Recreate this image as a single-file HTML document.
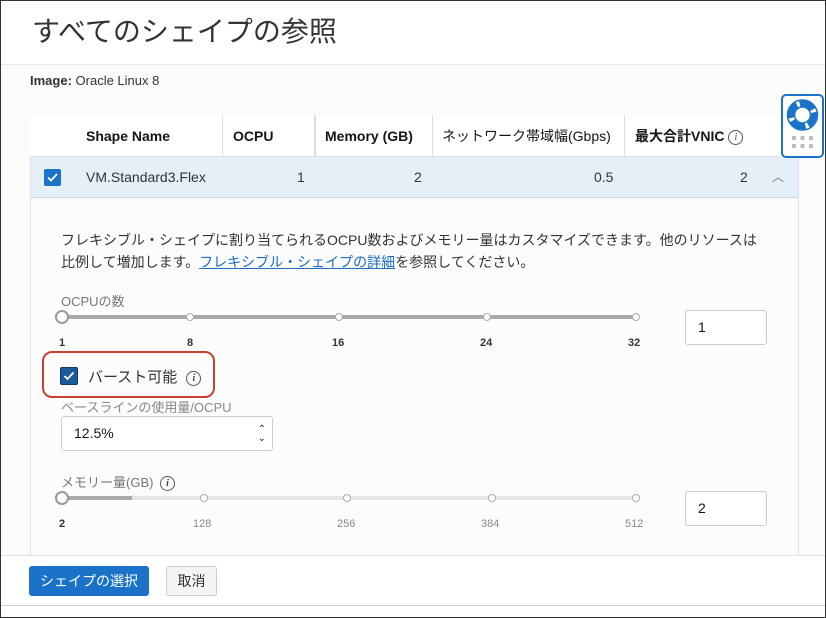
<!DOCTYPE html>
<html><head><meta charset="utf-8"><style>
*{box-sizing:border-box;margin:0;padding:0}
body{width:826px;height:618px;overflow:hidden;background:#fff;font-family:"Liberation Sans","Noto Sans CJK JP",sans-serif;color:#161513;position:relative}
.frame{position:absolute;left:0;top:0;width:826px;height:618px;border:1px solid #333;pointer-events:none;z-index:10}
.abs{position:absolute}
.body{position:absolute;left:1px;top:64px;width:824px;height:492px;background:#fbfbfa;border-top:1px solid #e8e8e8}
.th{position:absolute;top:115px;height:42px;font-size:14px;font-weight:bold;line-height:42px}
.vl{position:absolute;top:115px;width:1px;height:42px;background:#ddd}
.tick{position:absolute;width:8px;height:8px;border-radius:50%;border:1.5px solid #aaa;background:#fff}
.lbl{position:absolute;font-size:11px;font-weight:bold;color:#333}
.lbl2{position:absolute;font-size:11px;color:#888}
.inp{position:absolute;background:#fff;border:1px solid #ccc;border-radius:3px;font-size:14px;padding-left:12px}
.info{display:inline-block;width:15px;height:15px;border:1.2px solid #555;border-radius:50%;font-size:10px;font-style:italic;font-family:"Liberation Serif",serif;text-align:center;line-height:13px;font-weight:bold;color:#444;vertical-align:middle}
</style></head><body>
<div class="frame"></div>
<div class="abs" style="left:32px;top:10px;font-size:28px;color:#333">すべてのシェイプの参照</div>
<div class="body"></div>
<div class="abs" style="left:30px;top:73px;font-size:13px;color:#333"><b>Image:</b> Oracle Linux 8</div>
<div class="abs" style="left:30px;top:115px;width:769px;height:440px;border:1px solid #e0e0e0;border-bottom:none;background:#fcfcfc"></div>
<div class="abs" style="left:30px;top:115px;width:751px;height:42px;background:#fff;border-bottom:1px solid #ddd"></div>
<div class="th" style="left:86px">Shape Name</div>
<div class="th" style="left:233px">OCPU</div>
<div class="th" style="left:325px">Memory (GB)</div>
<div class="th" style="left:442px;font-weight:normal">ネットワーク帯域幅(Gbps)</div>
<div class="th" style="left:635px;font-weight:bold">最大合計VNIC <span class="info" style="font-weight:normal">i</span></div>
<div class="vl" style="left:222px"></div><div class="vl" style="left:314px;width:2px"></div><div class="vl" style="left:432px"></div><div class="vl" style="left:624px"></div>
<div class="abs" style="left:31px;top:157px;width:767px;height:41px;background:#e5eff8;border-bottom:1px solid #d0d8e0"></div>
<div class="abs" style="left:44px;top:169px;width:17px;height:17px;background:#1a73c9;border-radius:2px"><svg width="17" height="17"><path d="M4 8.5l3 3 6-6.5" fill="none" stroke="#fff" stroke-width="1.8"/></svg></div>
<div class="abs" style="left:86px;top:169px;font-size:14px;color:#333">VM.Standard3.Flex</div>
<div class="abs" style="left:297px;top:169px;font-size:14px;color:#333">1</div>
<div class="abs" style="left:414px;top:169px;font-size:14px;color:#333">2</div>
<div class="abs" style="left:594px;top:169px;font-size:14px;color:#333">0.5</div>
<div class="abs" style="left:740px;top:169px;font-size:14px;color:#333">2</div>
<div class="abs" style="left:772px;top:168px;font-size:12px;color:#777">︿</div>
<div class="abs" style="left:61px;top:229px;font-size:14px;line-height:22px;color:#333;width:703px">フレキシブル・シェイプに割り当てられるOCPU数およびメモリー量はカスタマイズできます。他のリソースは比例して増加します。<span style="color:#1a6cc4;text-decoration:underline">フレキシブル・シェイプの詳細</span>を参照してください。</div>
<div class="abs" style="left:61px;top:291px;font-size:13px;color:#777">OCPUの数</div>
<div class="abs" style="left:62px;top:315px;width:575px;height:4px;background:#a9a9a9;border-radius:2px"></div>
<div class="abs" style="left:55px;top:310px;width:14px;height:14px;border-radius:50%;border:2px solid #999;background:#fff"></div>
<div class="tick" style="left:186px;top:313px"></div><div class="tick" style="left:335px;top:313px"></div><div class="tick" style="left:483px;top:313px"></div><div class="tick" style="left:632px;top:313px"></div>
<div class="lbl" style="left:59px;top:337px">1</div><div class="lbl" style="left:187px;top:337px">8</div><div class="lbl" style="left:332px;top:337px">16</div><div class="lbl" style="left:480px;top:337px">24</div><div class="lbl" style="left:628px;top:337px">32</div>
<div class="inp" style="left:685px;top:310px;width:82px;height:35px;line-height:33px">1</div>
<div class="abs" style="left:42px;top:351px;width:173px;height:47px;border:2.5px solid #c94231;border-radius:10px"></div>
<div class="abs" style="left:60px;top:367px;width:18px;height:18px;background:#1c5a9c;border:1px solid #0c3c6d;border-radius:2px"><svg width="16" height="16"><path d="M3.5 8l3 3 6-6.5" fill="none" stroke="#fff" stroke-width="1.8"/></svg></div>
<div class="abs" style="left:88px;top:366px;font-size:15px;color:#333">バースト可能 <span class="info" style="margin-left:5px">i</span></div>
<div class="abs" style="left:61px;top:397px;font-size:13px;color:#888">ベースラインの使用量/OCPU</div>
<div class="inp" style="left:61px;top:416px;width:212px;height:35px;line-height:33px">12.5%<span style="position:absolute;right:6px;top:0;font-size:10px;line-height:9px;padding-top:8px;color:#333">⌃<br>⌄</span></div>
<div class="abs" style="left:61px;top:472px;font-size:13px;color:#777">メモリー量(GB) <span class="info" style="margin-left:3px">i</span></div>
<div class="abs" style="left:62px;top:496px;width:575px;height:4px;background:#e6e6e6;border-radius:2px"></div>
<div class="abs" style="left:62px;top:496px;width:70px;height:4px;background:#a9a9a9"></div>
<div class="abs" style="left:55px;top:491px;width:14px;height:14px;border-radius:50%;border:2px solid #999;background:#fff"></div>
<div class="tick" style="left:200px;top:494px"></div><div class="tick" style="left:343px;top:494px"></div><div class="tick" style="left:488px;top:494px"></div><div class="tick" style="left:632px;top:494px"></div>
<div class="lbl" style="left:59px;top:518px">2</div><div class="lbl2" style="left:193px;top:518px">128</div><div class="lbl2" style="left:337px;top:518px">256</div><div class="lbl2" style="left:481px;top:518px">384</div><div class="lbl2" style="left:625px;top:518px">512</div>
<div class="inp" style="left:685px;top:491px;width:82px;height:35px;line-height:33px">2</div>
<div class="abs" style="left:1px;top:555px;width:824px;height:51px;background:#fff;border-top:1px solid #e2e2e2;border-bottom:1px solid #ccc"></div>
<div class="abs" style="left:29px;top:566px;width:120px;height:30px;background:#1a73c9;border-radius:3px;color:#fff;font-size:14px;text-align:center;line-height:30px">シェイプの選択</div>
<div class="abs" style="left:166px;top:566px;width:51px;height:30px;background:#f4f4f4;border:1px solid #ccc;border-radius:3px;font-size:14px;text-align:center;line-height:28px;color:#333">取消</div>
<div class="abs" style="left:781px;top:94px;width:43px;height:64px;background:#fff;border:2px solid #1a73c9;border-radius:5px">
<svg width="39" height="60" viewBox="0 0 39 60"><circle cx="19.5" cy="19" r="11.5" fill="none" stroke="#1a73c9" stroke-width="6"/><circle cx="19.5" cy="19" r="11.5" fill="none" stroke="#fff" stroke-width="6.5" stroke-dasharray="3 15.06" stroke-dashoffset="-3" transform="rotate(45 19.5 19)"/><circle cx="19.5" cy="19" r="15" fill="none" stroke="#1a73c9" stroke-width="1.5"/><circle cx="19.5" cy="19" r="8" fill="none" stroke="#1a73c9" stroke-width="1.5"/>
<g fill="#bbb"><rect x="9" y="40" width="4" height="4"/><rect x="17.5" y="40" width="4" height="4"/><rect x="26" y="40" width="4" height="4"/><rect x="9" y="48" width="4" height="4"/><rect x="17.5" y="48" width="4" height="4"/><rect x="26" y="48" width="4" height="4"/></g></svg></div>
</body></html>
